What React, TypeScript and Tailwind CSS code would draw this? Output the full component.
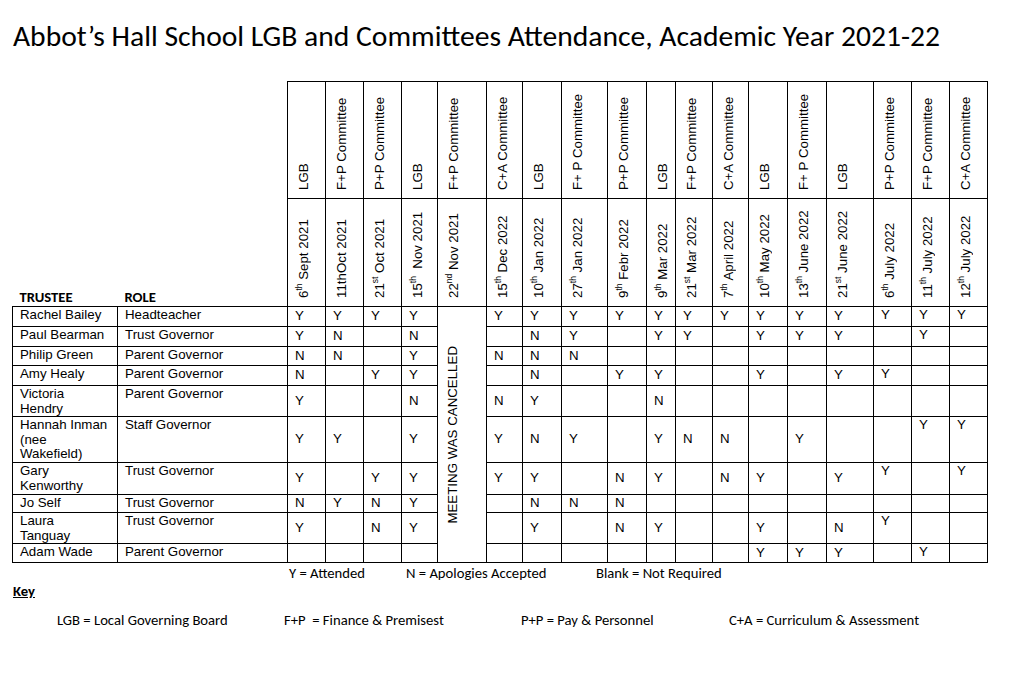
import React from "react";

const CAL = { fontFamily: "Carlito, 'Liberation Sans Narrow', 'Open Sans', sans-serif" };
const ARIAL = { fontFamily: "'Liberation Sans', Arial, sans-serif" };

type Col = { type: string; day: string; sup?: string; rest: string };

const cols: Col[] = [
  { type: "LGB", day: "6", sup: "th", rest: " Sept 2021" },
  { type: "F+P Committee", day: "11thOct 2021", rest: "" },
  { type: "P+P Committee", day: "21", sup: "st", rest: " Oct 2021" },
  { type: "LGB", day: "15", sup: "th", rest: "  Nov 2021" },
  { type: "F+P Committee", day: "22", sup: "nd", rest: " Nov 2021" },
  { type: "C+A Committee", day: "15", sup: "th", rest: " Dec 2022" },
  { type: "LGB", day: "10", sup: "th", rest: " Jan 2022" },
  { type: "F+ P Committee", day: "27", sup: "th", rest: " Jan 2022" },
  { type: "P+P Committee", day: "9", sup: "th", rest: " Febr 2022" },
  { type: "LGB", day: "9", sup: "th", rest: " Mar 2022" },
  { type: "F+P Committee", day: "21", sup: "st", rest: " Mar 2022" },
  { type: "C+A Committee", day: "7", sup: "th", rest: " April 2022" },
  { type: "LGB", day: "10", sup: "th", rest: " May 2022" },
  { type: "F+ P Committee", day: "13", sup: "th", rest: " June 2022" },
  { type: "LGB", day: "21", sup: "st", rest: " June 2022" },
  { type: "P+P Committee", day: "6", sup: "th", rest: " July 2022" },
  { type: "F+P Committee", day: "11", sup: "th", rest: " July 2022" },
  { type: "C+A Committee", day: "12", sup: "th", rest: " July 2022" },
];

const widths = [38, 38, 38, 36, 49, 36, 39, 46, 39, 29, 37, 36, 39, 39, 47, 38, 38, 38];

type Row = { name: string[]; role: string; h: number; v: string };

// v: 18 chars, index 4 (cancelled) ignored
const rows: Row[] = [
  { name: ["Rachel Bailey"], role: "Headteacher", h: 20, v: "YYYY-YYYYYYYYYYYYY" },
  { name: ["Paul Bearman"], role: "Trust Governor", h: 20, v: "YN N- NY YY YYY Y " },
  { name: ["Philip Green"], role: "Parent Governor", h: 19, v: "NN Y-NNN          " },
  { name: ["Amy Healy"], role: "Parent Governor", h: 20, v: "N YY- N YY  Y YY  " },
  { name: ["Victoria", "Hendry"], role: "Parent Governor", h: 31, v: "Y  N-NY  N        " },
  { name: ["Hannah Inman", "(nee", "Wakefield)"], role: "Staff Governor", h: 46, v: "YY Y-YNY YNN Y  YY" },
  { name: ["Gary", "Kenworthy"], role: "Trust Governor", h: 32, v: "Y YY-YY NY NY YY Y" },
  { name: ["Jo Self"], role: "Trust Governor", h: 18, v: "NYNY- NNN         " },
  { name: ["Laura", "Tanguay"], role: "Trust Governor", h: 31, v: "Y NY- Y NY  Y NY  " },
  { name: ["Adam Wade"], role: "Parent Governor", h: 19, v: "    -       YYY Y " },
];

function Vert({ children, h, pad }: { children: React.ReactNode; h: number; pad: number }) {
  return (
    <div
      className="w-full [writing-mode:vertical-rl] rotate-180 whitespace-pre text-left pr-[8px] leading-[15px]"
      style={{ height: h, paddingTop: pad }}
    >
      {children}
    </div>
  );
}

export default function App() {
  const total = rows.reduce((a, r) => a + r.h, 0);
  return (
    <div className="w-[1015px] h-[678px] bg-white text-black overflow-hidden">
      <div className="h-[81px] pl-[13px] pt-[18px]">
        <h1 className="text-[29.6px] leading-[36px] font-normal whitespace-nowrap" style={CAL}>
          Abbot’s Hall School LGB and Committees Attendance, Academic Year 2021-22
        </h1>
      </div>
      <table
        className="ml-[12px] border-collapse table-fixed text-[13.3px] leading-[15px]"
        style={{ ...ARIAL, width: 975 }}
      >
        <colgroup>
          <col style={{ width: 105 }} />
          <col style={{ width: 170 }} />
          {widths.map((w, i) => (
            <col key={i} style={{ width: w }} />
          ))}
        </colgroup>
        <thead>
          <tr>
            <th rowSpan={2} className="p-0 align-bottom text-left font-bold">
              <div className="pl-[7px] pb-[1px] text-[14.67px] leading-[16px]" style={CAL}>
                TRUSTEE
              </div>
            </th>
            <th rowSpan={2} className="p-0 align-bottom text-left font-bold">
              <div className="pl-[7px] pb-[1px] text-[14.67px] leading-[16px]" style={CAL}>
                ROLE
              </div>
            </th>
            {cols.map((c, i) => (
              <th key={i} className="p-0 border border-black font-normal align-top">
                <Vert h={116} pad={8}>
                  {c.type}
                </Vert>
              </th>
            ))}
          </tr>
          <tr>
            {cols.map((c, i) => (
              <th key={i} className="p-0 border border-black font-normal align-top">
                <Vert h={107} pad={8}>
                  {c.day}
                  {c.sup && <sup className="text-[8.5px] static align-super">{c.sup}</sup>}
                  {c.rest}
                </Vert>
              </th>
            ))}
          </tr>
        </thead>
        <tbody>
          {rows.map((r, ri) => (
            <tr key={ri} style={{ height: r.h }}>
              <td className="p-0 pl-[7px] pt-[1px] border border-black align-top">
                {r.name.map((n, k) => (
                  <div key={k} className="leading-[14.5px]">{n}</div>
                ))}
              </td>
              <td className="p-0 pl-[7px] pt-[1px] border border-black align-top leading-[14.5px]">{r.role}</td>
              {r.v.split("").map((ch, ci) => {
                if (ci === 4) {
                  if (ri !== 0) return null;
                  return (
                    <td key={ci} rowSpan={rows.length} className="p-0 border border-black align-middle">
                      <div className="flex items-center" style={{ height: total - 4 }}>
                        <div className="w-full [writing-mode:vertical-rl] rotate-180 text-center pr-[7px] leading-[15px]">
                          MEETING WAS CANCELLED
                        </div>
                      </div>
                    </td>
                  );
                }
                const top = ci >= 15;
                return (
                  <td
                    key={ci}
                    className={
                      "p-0 pl-[7px] border border-black leading-[14.5px] " +
                      (top ? "align-top pt-[1px]" : "align-middle")
                    }
                  >
                    {ch.trim()}
                  </td>
                );
              })}
            </tr>
          ))}
        </tbody>
      </table>
      <div className="flex text-[14.67px] leading-[18px] mt-[1px] pl-[289px]" style={CAL}>
        <span className="w-[117px]">Y = Attended</span>
        <span className="w-[190px]">N = Apologies Accepted</span>
        <span>Blank = Not Required</span>
      </div>
      <div className="pl-[13px] text-[14.67px] leading-[18px] font-bold underline" style={CAL}>
        Key
      </div>
      <div className="flex text-[14.67px] leading-[18px] mt-[11px]" style={CAL}>
        <span className="pl-[57px] w-[284px]">LGB = Local Governing Board</span>
        <span className="w-[237px]">F+P&nbsp; = Finance &amp; Premisest</span>
        <span className="w-[208px]">P+P = Pay &amp; Personnel</span>
        <span>C+A = Curriculum &amp; Assessment</span>
      </div>
    </div>
  );
}
